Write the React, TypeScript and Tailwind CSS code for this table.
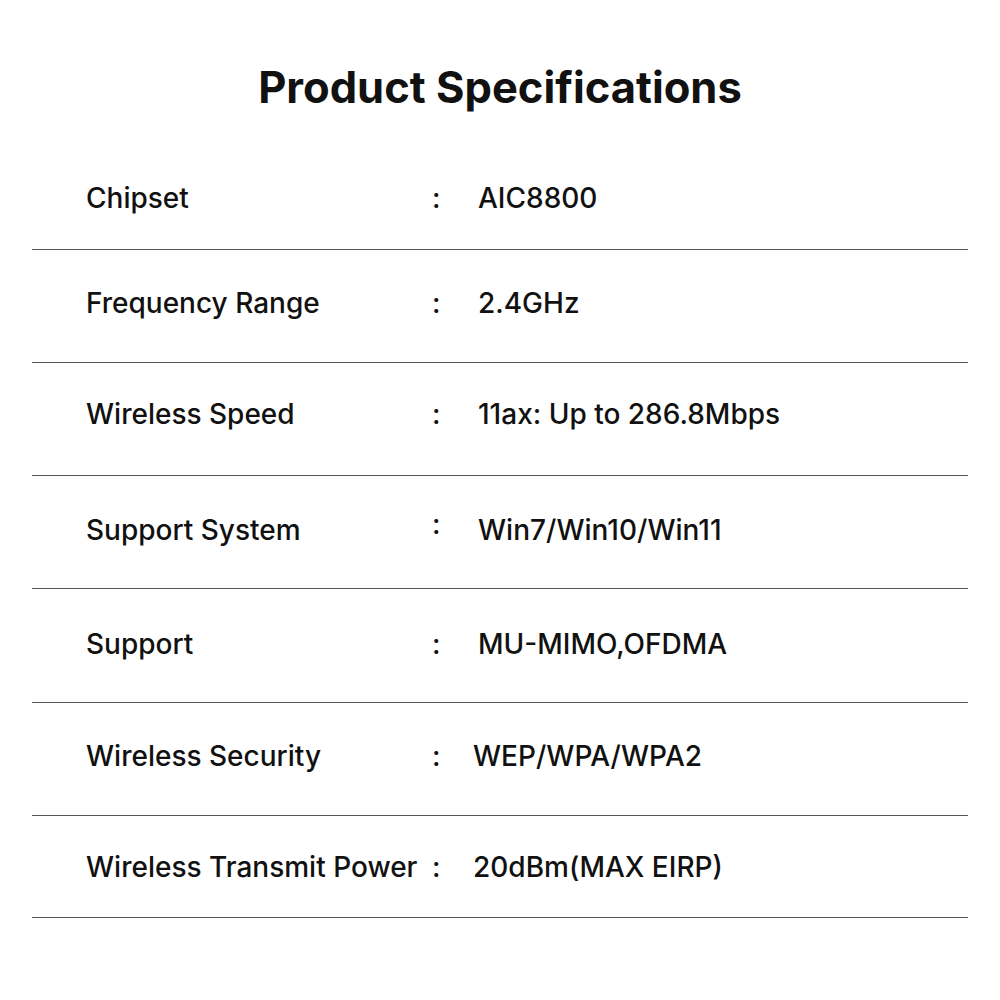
import React from "react";

type Spec = {
  label: string;
  value: string;
  h: string;
  pt: string;
  valueX: string;
  colonY: string;
};

const specs: Spec[] = [
  { label: "Chipset", value: "AIC8800", h: "h-[110px]", pt: "pt-[41px]", valueX: "pl-[36px]", colonY: "" },
  { label: "Frequency Range", value: "2.4GHz", h: "h-[113px]", pt: "pt-[36px]", valueX: "pl-[36px]", colonY: "" },
  { label: "Wireless Speed", value: "11ax: Up to 286.8Mbps", h: "h-[113px]", pt: "pt-[34px]", valueX: "pl-[36px]", colonY: "" },
  { label: "Support System", value: "Win7/Win10/Win11", h: "h-[113px]", pt: "pt-[37px]", valueX: "pl-[36px]", colonY: "-translate-y-[6px]" },
  { label: "Support", value: "MU-MIMO,OFDMA", h: "h-[114px]", pt: "pt-[38px]", valueX: "pl-[36px]", colonY: "" },
  { label: "Wireless Security", value: "WEP/WPA/WPA2", h: "h-[113px]", pt: "pt-[36px]", valueX: "pl-[31px]", colonY: "" },
  { label: "Wireless Transmit Power", value: "20dBm(MAX EIRP)", h: "h-[102px]", pt: "pt-[34px]", valueX: "pl-[31px]", colonY: "" },
];

const App: React.FC = () => {
  return (
    <div
      className="w-[1000px] h-[1000px] bg-white text-[#111]"
      style={{ fontFamily: "Inter, 'Noto Sans', sans-serif" }}
    >
      <h1 className="pt-[59px] text-center text-[43.5px] leading-[56px] font-bold">
        Product Specifications
      </h1>
      <div className="mt-[25px] mx-[32px]">
        {specs.map((s) => (
          <div
            key={s.label}
            className={`${s.h} ${s.pt} border-b-[1.5px] border-[#555] flex text-[28px] leading-[34px] font-medium`}
          >
            <div className="pl-[54px] w-[400px] whitespace-nowrap">{s.label}</div>
            <div className={`w-[10px] ${s.colonY}`}>:</div>
            <div className={`${s.valueX} whitespace-nowrap`}>{s.value}</div>
          </div>
        ))}
      </div>
    </div>
  );
};

export default App;
